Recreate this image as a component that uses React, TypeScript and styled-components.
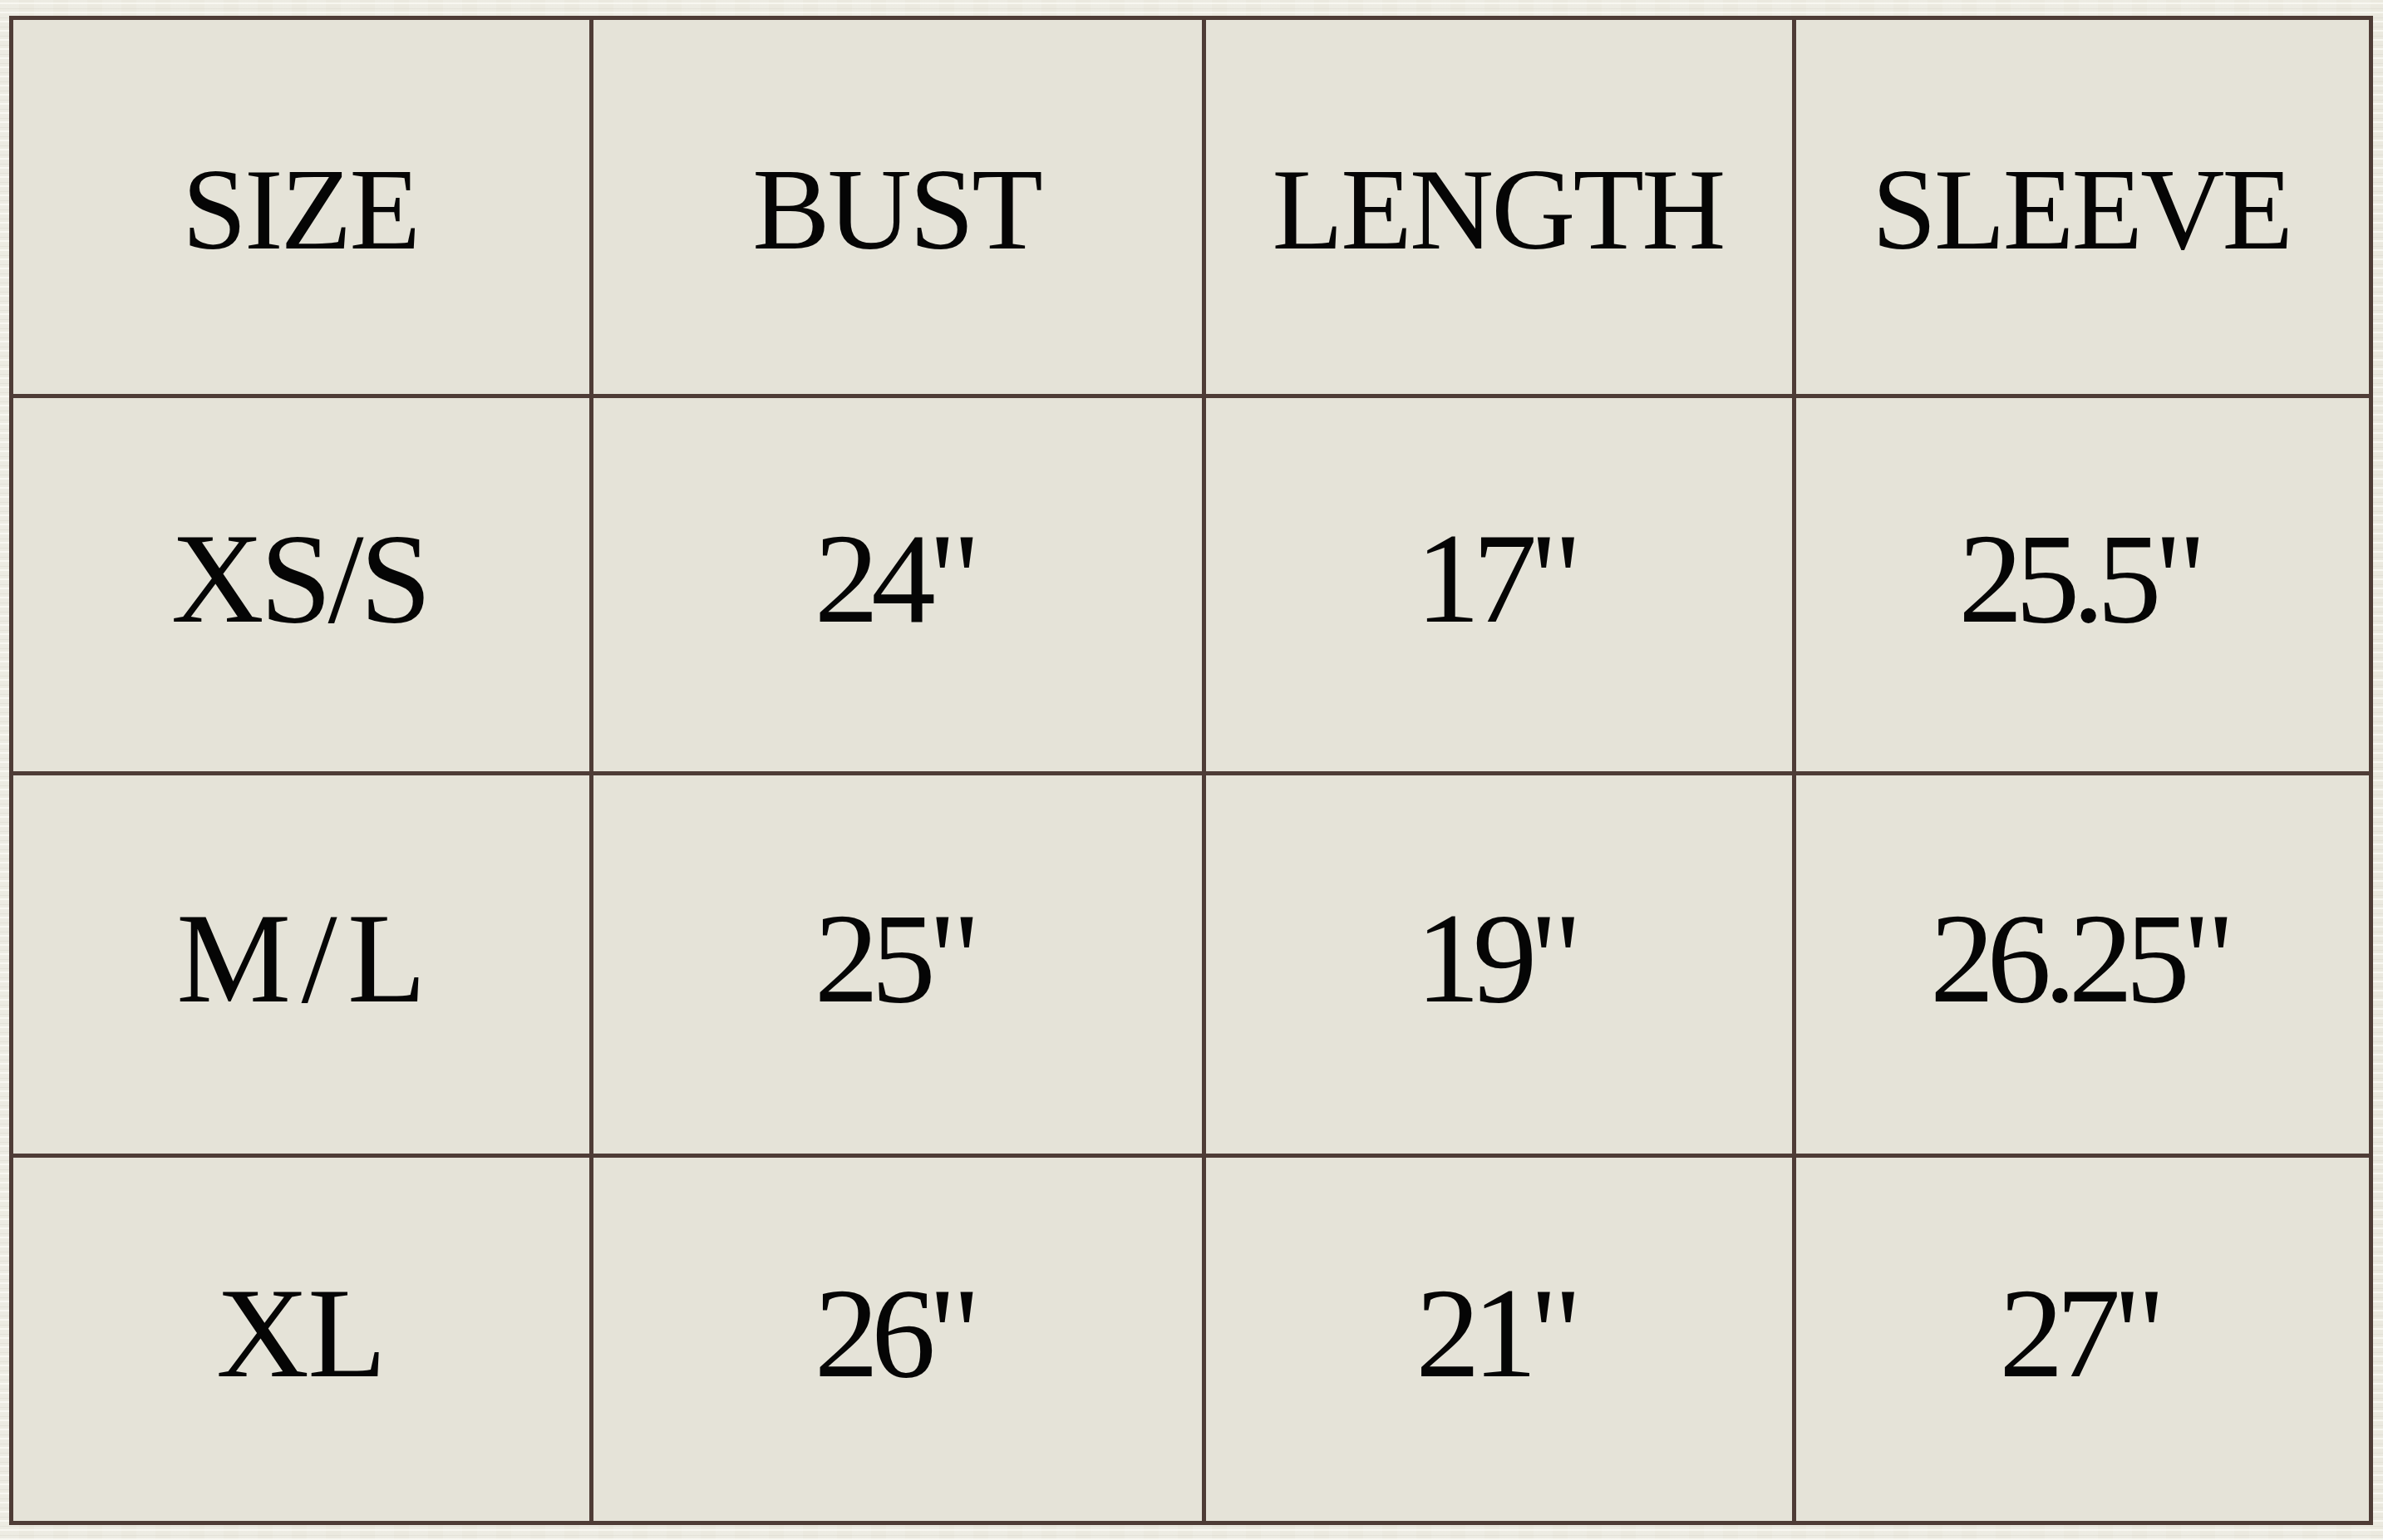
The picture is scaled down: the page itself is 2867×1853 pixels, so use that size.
import React from 'react';
import styled, {createGlobalStyle} from 'styled-components';

const GlobalStyle = createGlobalStyle`
  html, body {
    margin: 0;
    padding: 0;
  }
  body {
    width: 2867px;
    height: 1853px;
    overflow: hidden;
    background-color: #ebe9df;
    background-image:
      repeating-linear-gradient(0deg, rgba(255,255,250,0.6) 0px, rgba(255,255,250,0.6) 2px, transparent 2px, transparent 5px, rgba(212,210,198,0.35) 5px, rgba(212,210,198,0.35) 6px, transparent 6px, transparent 11px),
      repeating-linear-gradient(90deg, rgba(255,255,255,0.12) 0px, rgba(255,255,255,0.12) 23px, transparent 23px, transparent 41px);
  }
`;

const Page = styled.div`
  padding: 19px 0 0 11px;
  font-family: "Liberation Serif", "Times New Roman", serif;
  color: #050505;
`;

const Table = styled.div`
  display: grid;
  grid-template-columns: 693px 732px 705px 689px;
  grid-template-rows: 450px 449px 455px 437px;
  gap: 5px;
  padding: 5px;
  width: 2844px;
  box-sizing: border-box;
  background: #4e3c36;
`;

const HeadCell = styled.div`
  background: #e5e3d8;
  display: flex;
  align-items: center;
  justify-content: center;
  font-size: 140px;
  line-height: 1;
  padding-top: 6px;
`;

const Cell = styled.div`
  background: #e5e3d8;
  display: flex;
  align-items: center;
  justify-content: center;
  font-size: 155px;
  line-height: 1;
  padding-bottom: 14px;
`;

// tracking is set per label; the trailing space it adds is taken back
const Label = styled.span<{$track: number}>`
  letter-spacing: ${p => p.$track}em;
  margin-right: ${p => -p.$track}em;
`;

const headers = ['SIZE', 'BUST', 'LENGTH', 'SLEEVE'];

const rows = [
  {size: 'XS/S', track: -0.03, values: ['24"', '17"', '25.5"']},
  {size: 'M/L', track: 0.08, values: ['25"', '19"', '26.25"']},
  {size: 'XL', track: -0.01, values: ['26"', '21"', '27"']},
];

export default function App() {
  return (
    <>
      <GlobalStyle />
      <Page>
        <Table>
          {headers.map(h => (
            <HeadCell key={h}>
              <Label $track={-0.02}>{h}</Label>
            </HeadCell>
          ))}
          {rows.map(r => (
            <React.Fragment key={r.size}>
              <Cell>
                <Label $track={r.track}>{r.size}</Label>
              </Cell>
              {r.values.map((v, i) => (
                <Cell key={i}>
                  <Label $track={-0.058}>{v}</Label>
                </Cell>
              ))}
            </React.Fragment>
          ))}
        </Table>
      </Page>
    </>
  );
}
